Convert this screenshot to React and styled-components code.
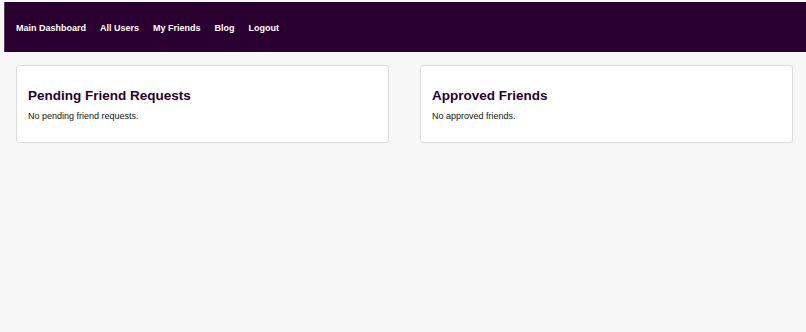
import React from 'react';
import styled, { createGlobalStyle } from 'styled-components';

const GlobalStyle = createGlobalStyle`
  html, body {
    margin: 0;
    padding: 0;
    background: #f7f7f7;
    font-family: "Liberation Sans", Arial, sans-serif;
  }
`;

const Page = styled.div`
  min-height: 332px;
  padding-top: 2px;
  box-sizing: border-box;
`;

const NavBar = styled.nav`
  margin-left: 4px;
  height: 50px;
  box-sizing: border-box;
  padding: 2px 11px 0;
  background: #2a0030;
  border-left: 1px solid #5a3a60;
  display: flex;
  align-items: center;
  gap: 14px;
`;

const NavLink = styled.a`
  color: #ffffff;
  font-weight: bold;
  font-size: 9px;
  text-decoration: none;
  cursor: pointer;
`;

const Content = styled.main`
  display: grid;
  grid-template-columns: 1fr 1fr;
  gap: 31px;
  padding: 13px 13px 0 16px;
`;

const Card = styled.section`
  background: #ffffff;
  border: 1px solid #dcdcdc;
  border-radius: 3px;
  height: 78px;
  box-sizing: border-box;
  padding: 22px 11px 0;
`;

const CardTitle = styled.h2`
  margin: 0 0 8px;
  font-size: 13.5px;
  font-weight: bold;
  color: #2a0030;
`;

const CardText = styled.p`
  margin: 0;
  font-size: 9px;
  color: #111;
`;

const links = ['Main Dashboard', 'All Users', 'My Friends', 'Blog', 'Logout'];

const App = () => (
  <Page>
    <GlobalStyle />
    <NavBar>
      {links.map(l => (
        <NavLink key={l}>{l}</NavLink>
      ))}
    </NavBar>
    <Content>
      <Card>
        <CardTitle>Pending Friend Requests</CardTitle>
        <CardText>No pending friend requests.</CardText>
      </Card>
      <Card>
        <CardTitle>Approved Friends</CardTitle>
        <CardText>No approved friends.</CardText>
      </Card>
    </Content>
  </Page>
);

export default App;
